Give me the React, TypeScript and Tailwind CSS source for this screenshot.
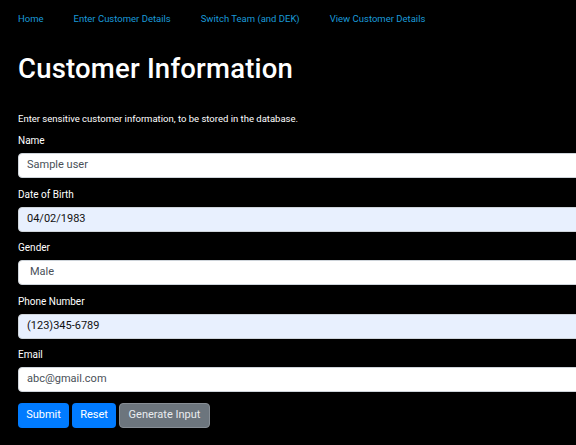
import React from "react";

const navLinks = ["Home", "Enter Customer Details", "Switch Team (and DEK)", "View Customer Details"];

const fields = [
  { label: "Name", value: "Sample user", autofill: false, select: false },
  { label: "Date of Birth", value: "04/02/1983", autofill: true, select: false },
  { label: "Gender", value: "Male", autofill: false, select: true },
  { label: "Phone Number", value: "(123)345-6789", autofill: true, select: false },
  { label: "Email", value: "abc@gmail.com", autofill: false, select: false },
];

export default function App() {
  return (
    <div className="w-[576px] h-[445px] overflow-hidden bg-black text-white font-['Roboto',sans-serif]">
      <nav className="flex gap-[30px] px-[18px] pt-[10px] text-[9.5px] leading-[18px] text-[#1a9ad8]">
        {navLinks.map((l) => (
          <a key={l} href="#" className="whitespace-nowrap">
            {l}
          </a>
        ))}
      </nav>

      <div className="px-[18px]">
        <h1 className="mt-[23px] text-[27.5px] leading-[36px] font-medium tracking-[0.2px]">Customer Information</h1>
        <p className="mt-[23px] mb-[4px] text-[9.5px] leading-[18px]">
          Enter sensitive customer information, to be stored in the database.
        </p>

        <form className="flex flex-col">
          {fields.map((f) => (
            <div key={f.label} className="flex flex-col mb-[7.5px]">
              <label className="text-[10px] leading-[18px]">{f.label}</label>
              <div
                className={`mt-[3px] w-[640px] h-[25px] flex items-center rounded-[4px] border border-[#ced4da] text-[11px] ${
                  f.autofill ? "bg-[#e8f0fe] text-[#111]" : "bg-white text-[#495057]"
                } ${f.select ? "pl-[11px]" : "pl-[8px]"}`}
              >
                {f.value}
              </div>
            </div>
          ))}

          <div className="flex gap-[3px] mt-[3px] text-[11px] whitespace-nowrap">
            <button type="button" className="h-[25px] w-[51px] rounded-[4px] bg-[#007bff] text-white">
              Submit
            </button>
            <button type="button" className="h-[25px] w-[44px] rounded-[4px] bg-[#007bff] text-white">
              Reset
            </button>
            <button type="button" className="h-[25px] w-[91px] rounded-[4px] bg-[#6c757d] border border-[#878e95] text-[#e9ecef]">
              Generate Input
            </button>
          </div>
        </form>
      </div>
    </div>
  );
}
